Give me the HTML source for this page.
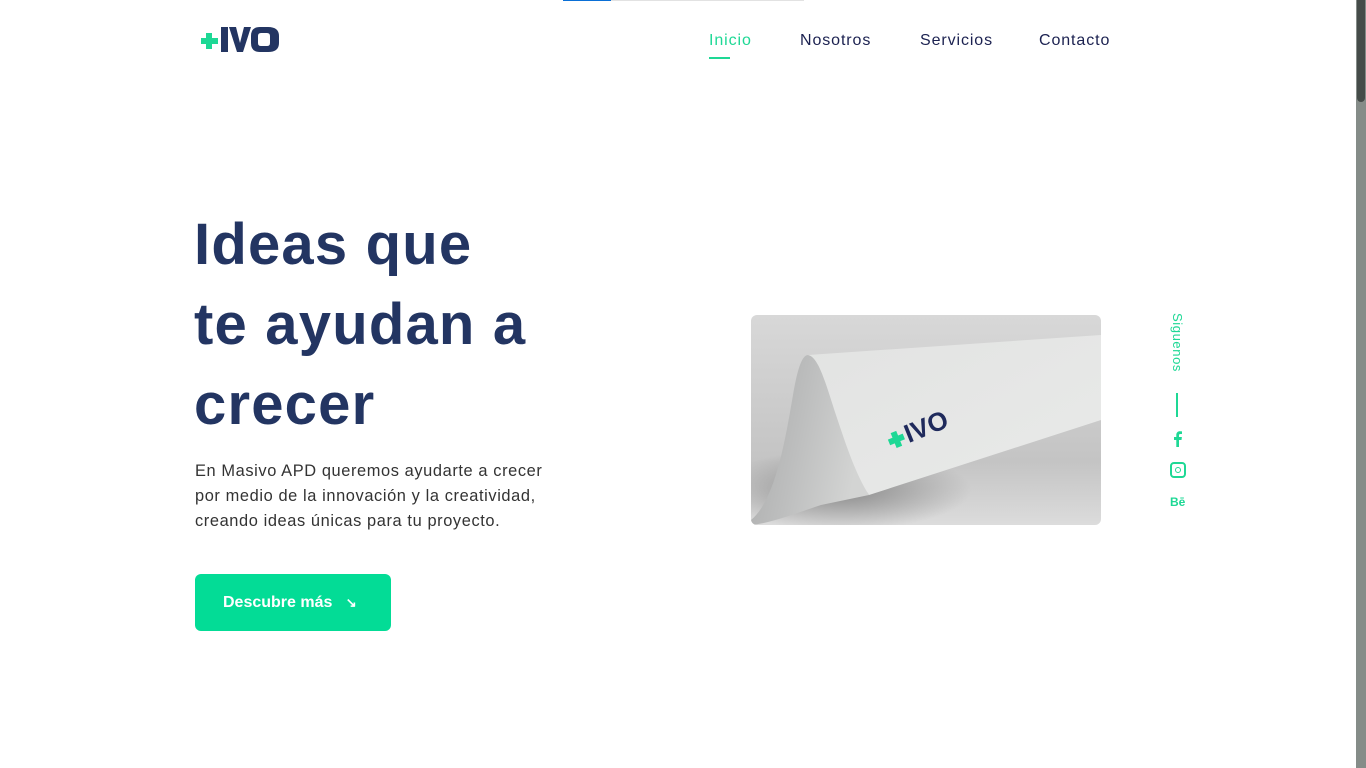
<!DOCTYPE html>
<html><head><meta charset="utf-8"><style>
html,body{margin:0;padding:0;width:1366px;height:768px;overflow:hidden;background:#fff;font-family:"Liberation Sans",sans-serif;}
.topbar{position:absolute;left:563px;top:0;width:241px;height:1px;background:#e2e2e2}
.topbar i{position:absolute;left:0;top:0;width:48px;height:1px;background:#0a6fd6}
.logo{position:absolute;left:200px;top:26px;}
.nav a{position:absolute;top:32px;font-size:16px;color:#1b2150;text-decoration:none;letter-spacing:0.9px}
.nav .act{color:#1ed895}
.uline{position:absolute;left:709px;top:57px;width:21px;height:2px;background:#1ed895}
h1{position:absolute;left:194px;top:205px;margin:0;font-size:58px;line-height:80px;font-weight:bold;color:#233562;letter-spacing:1.2px;white-space:nowrap}
p{position:absolute;left:195px;top:459px;margin:0;font-size:16.4px;line-height:25px;color:#333;white-space:nowrap;letter-spacing:0.6px}
.btn{position:absolute;left:195px;top:574px;width:196px;height:57px;border-radius:6px;background:#03dc96;color:#fff;font-size:16px;font-weight:bold;line-height:57px;text-indent:28px}
.img{position:absolute;left:751px;top:315px;width:350px;height:210px;border-radius:6px;overflow:hidden}
.sig{position:absolute;left:1170px;top:313px;writing-mode:vertical-rl;font-size:13px;color:#1ed895;letter-spacing:0.6px}
.sb{position:absolute;left:1356px;top:0;width:10px;height:768px;background:#858c88}
.sb i{position:absolute;left:1px;top:0;width:8px;height:102px;background:#454c49;border-radius:0 0 4px 4px}
</style></head><body>
<div class="topbar"><i></i></div>
<svg class="logo" width="80" height="28" viewBox="0 0 80 28">
<path d="M6 7h6v5h6v6h-6v5h-6v-5h-5v-6h5z" fill="#1ed895"/>
<rect x="21" y="1" width="7" height="25" fill="#233562"/>
<path d="M29 1h7l4 16 4-16h7l-8 25h-6z" fill="#233562"/>
<path d="M60 1h8q11 0 11 9v7q0 9-11 9h-8q-9 0-9-9v-7q0-9 9-9zm1 6q-3 0-3 3v7q0 3 3 3h6q3 0 3-3v-7q0-3-3-3z" fill="#233562"/>
</svg>
<div class="nav">
<a class="act" style="left:709px">Inicio</a>
<a style="left:800px">Nosotros</a>
<a style="left:920px">Servicios</a>
<a style="left:1039px">Contacto</a>
</div>
<div class="uline"></div>
<h1>Ideas que<br>te ayudan a<br>crecer</h1>
<p>En Masivo APD queremos ayudarte a crecer<br>por medio de la innovación y la creatividad,<br>creando ideas únicas para tu proyecto.</p>
<div class="btn">Descubre más &nbsp;&nbsp;<span style="font-size:13px">↘</span></div>
<div class="img"><svg width="350" height="210" viewBox="0 0 350 210">
<defs>
<linearGradient id="bg" x1="0" y1="0" x2="0" y2="1"><stop offset="0" stop-color="#d8d8d8"/><stop offset="0.7" stop-color="#c4c4c4"/><stop offset="1" stop-color="#dcdcdc"/></linearGradient>
<linearGradient id="cv" x1="0" y1="0" x2="1" y2="0.3"><stop offset="0" stop-color="#a9aaaa"/><stop offset="0.5" stop-color="#bdbebe"/><stop offset="1" stop-color="#d3d4d3"/></linearGradient>
<linearGradient id="fr" x1="0" y1="0" x2="1" y2="1"><stop offset="0" stop-color="#e2e3e2"/><stop offset="1" stop-color="#e9eae9"/></linearGradient>
<radialGradient id="sh" cx="0.5" cy="0.5" r="0.5"><stop offset="0" stop-color="#8a8a8a"/><stop offset="1" stop-color="#8a8a8a" stop-opacity="0"/></radialGradient>
</defs>
<rect width="350" height="210" fill="url(#bg)"/>
<ellipse cx="90" cy="175" rx="130" ry="40" fill="url(#sh)"/>
<path d="M0 205 C25 185 35 120 42 80 C47 50 52 40 57 40 C70 40 80 80 95 120 C105 150 112 170 118 180 L70 190 C40 200 20 208 0 210z" fill="url(#cv)"/>
<path d="M57 40 L350 20 L350 105 L118 180 C105 160 95 130 85 100 C75 70 68 42 57 40z" fill="url(#fr)"/>
<g transform="translate(135,120) rotate(-22)">
<path d="M5 0h6v5h5v6h-5v5h-6v-5h-5v-6h5z" fill="#1ed895"/>
<text x="18" y="16" font-size="26" font-weight="bold" fill="#1f2a5c" font-family="Liberation Sans">IVO</text>
</g>
</svg></div>
<div class="sig">Siguenos</div>
<div style="position:absolute;left:1176px;top:393px;width:2px;height:24px;background:#1ed895"></div>
<svg style="position:absolute;left:1172px;top:431px" width="12" height="16" viewBox="0 0 12 16"><path d="M7 16V9h2.5l.4-3H7V4.3c0-.8.3-1.3 1.4-1.3H10V.4C9.6.3 8.8.2 7.9.2 5.8.2 4.3 1.5 4.3 3.8V6H2v3h2.3v7z" fill="#1ed895"/></svg>
<div style="position:absolute;left:1170px;top:462px;width:12px;height:12px;border:2px solid #1ed895;border-radius:4px"><div style="position:absolute;left:3px;top:3px;width:4px;height:4px;border:1.5px solid #1ed895;border-radius:50%"></div></div>
<div style="position:absolute;left:1170px;top:495px;color:#1ed895;font-weight:bold;font-size:12px">Bē</div>
<div class="sb"><i></i></div>
</body></html>
